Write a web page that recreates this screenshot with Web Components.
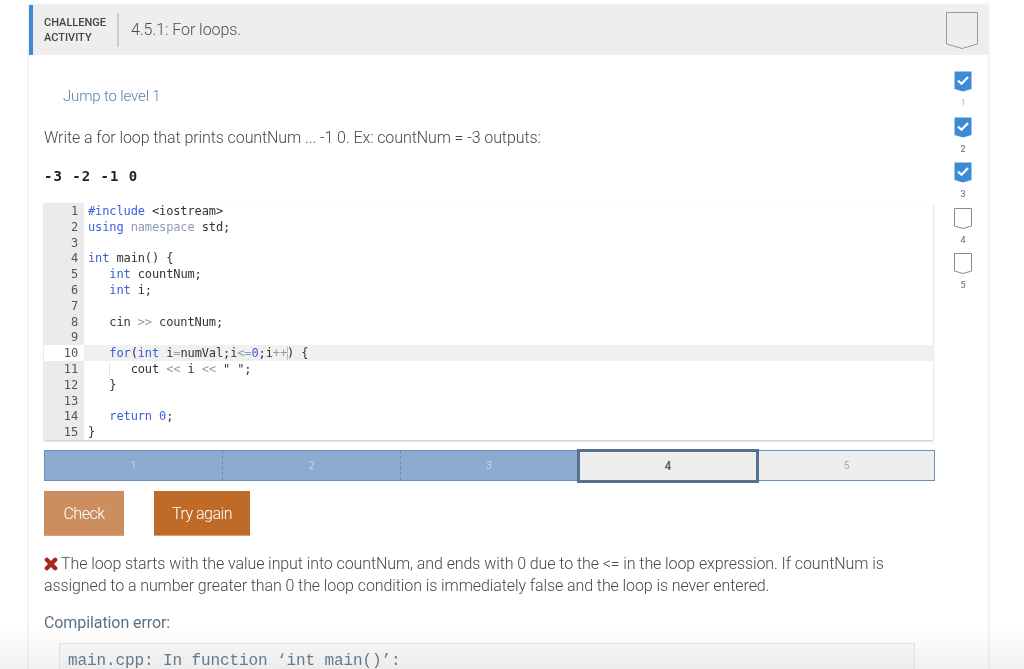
<!DOCTYPE html>
<html>
<head>
<meta charset="utf-8">
<title>4.5.1: For loops.</title>
<style>
html, body { margin: 0; height: 669px; overflow: hidden; background: #fff; }
body { font-family: Roboto, "Liberation Sans", sans-serif; font-weight: 300; font-size: 16px; letter-spacing: -.09px; color: #3f4a52; }
</style>
</head>
<body>
<challenge-card>
    <level-shield slot="badge" size="big"></level-shield>
    <challenge-body></challenge-body>
    <level-rail slot="rail"></level-rail>
</challenge-card>
<script>
class LevelShield extends HTMLElement {
    constructor() {
        super();
        this.attachShadow({ mode: 'open' });
    }
    connectedCallback() {
        const big = this.getAttribute('size') === 'big';
        const done = this.hasAttribute('done');
        const w = big ? 32 : 18;
        const h = big ? 37 : 21;
        const tip = big ? 5 : 3;
        const stroke = done ? 'none' : (big ? '#999' : '#8a8a8a');
        const fill = done ? '#3d8bd4' : (big ? '#eee' : '#fff');
        const check = done ? `<path d="M4 9.6 L7.6 12.8 L14 6" fill="none" stroke="#fff" stroke-width="2.2"/>` : '';
        this.shadowRoot.innerHTML = `
        <style>:host { display: block; width: ${w}px; height: ${h}px; } svg { display: block; }</style>
        <svg width="${w}" height="${h}" viewBox="0 0 ${w} ${h}">
            <path d="M.5 .5 H${w - .5} V${h - tip} L${w / 2} ${h - .5} L.5 ${h - tip} Z" fill="${fill}" stroke="${stroke}"/>
            ${check}
        </svg>`;
    }
}
customElements.define('level-shield', LevelShield);

class LevelRail extends HTMLElement {
    constructor() {
        super();
        this.attachShadow({ mode: 'open' });
    }
    connectedCallback() {
        const items = [1, 2, 3, 4, 5].map(n => `
            <div class="item">
                <level-shield ${n < 4 ? 'done' : ''}></level-shield>
                <span class="${n === 1 ? 'dim' : ''}">${n}</span>
            </div>`).join('');
        this.shadowRoot.innerHTML = `
        <style>
        :host { display: flex; flex-direction: column; align-items: center; width: 18px; }
        .item { display: flex; flex-direction: column; align-items: center; height: 45.5px; }
        span { font: 400 9px/12px Roboto, sans-serif; color: #666; margin-top: 5px; }
        .dim { color: #bbb; }
        </style>
        ${items}`;
    }
}
customElements.define('level-rail', LevelRail);

class ChallengeCard extends HTMLElement {
    constructor() {
        super();
        this.attachShadow({ mode: 'open' });
    }
    connectedCallback() {
        this.shadowRoot.innerHTML = `
        <style>
        :host { display: block; width: 959px; height: 664px; margin: 5px 0 0 29px; box-shadow: 0 0 3px rgba(0,0,0,.16); position: relative; background: #fff; }
        header { display: flex; align-items: center; height: 50px; background: #eee; box-sizing: border-box; border-left: 4px solid #3d8bd4; padding-left: 11px; padding-right: 10px; }
        .kind { width: 63px; font: 500 11px/15px Roboto, sans-serif; letter-spacing: 0; color: #444; padding-right: 10px; }
        .rule { width: 2px; height: 34px; background: #ccc; margin-right: 12px; }
        .title { flex: 1; font-size: 16px; color: #46525a; letter-spacing: -.05px; position: relative; top: -1px; }
        .row { display: flex; }
        .main { width: 890px; padding-left: 15px; }
        .rail { padding: 16px 0 0 20px; }
        .fade { position: absolute; left: -29px; width: 1024px; top: 620px; height: 44px; pointer-events: none; mix-blend-mode: multiply; background: linear-gradient(#fff, #f1f1f1); }
        </style>
        <header>
            <div class="kind">CHALLENGE ACTIVITY</div>
            <div class="rule"></div>
            <div class="title">4.5.1: For loops.</div>
            <slot name="badge"></slot>
        </header>
        <div class="row">
            <div class="main"><slot></slot></div>
            <div class="rail"><slot name="rail"></slot></div>
        </div>
        <div class="fade"></div>`;
    }
}
customElements.define('challenge-card', ChallengeCard);

class CodeEditor extends HTMLElement {
    constructor() {
        super();
        this.attachShadow({ mode: 'open' });
    }
    connectedCallback() {
        const k = s => `<b>${s}</b>`;
        const o = s => `<i>${s}</i>`;
        const lines = [
            `${k('#include')} &lt;iostream&gt;`,
            `${k('using')} ${o('namespace')} std;`,
            ``,
            `${k('int')} main() {`,
            `   ${k('int')} countNum;`,
            `   ${k('int')} i;`,
            ``,
            `   cin ${o('&gt;&gt;')} countNum;`,
            ``,
            `   ${k('for')}(${k('int')} i${o('=')}numVal;i${o('&lt;=')}${k('0')};i${o('++')}<u></u>) {`,
            `      cout ${o('&lt;&lt;')} i ${o('&lt;&lt;')} " ";`,
            `   }`,
            ``,
            `   ${k('return')} ${k('0')};`,
            `}`
        ];
        const html = lines.map((line, n) => `<div class="line${n === 9 ? ' active' : ''}"><span class="num">${n + 1}</span><span class="src">${line}</span></div>`).join('');
        this.shadowRoot.innerHTML = `
        <style>
        :host { display: block; width: 889px; box-shadow: 0 1px 2px rgba(0,0,0,.25); position: relative; }
        .line { display: flex; height: 15.8px; font: 400 12px/16.2px "DejaVu Sans Mono", monospace; color: #333; letter-spacing: -.12px; }
        .num { flex: none; width: 34px; padding-right: 6px; text-align: right; background: #ebebeb; color: #555; }
        .src { flex: 1; padding-left: 4px; white-space: pre; }
        .active { background: #f0f0f0; }
        .active .num { background: #fff; }
        b { font-weight: 400; color: #3b5fd9; }
        i { font-style: normal; color: #8f9bb0; }
        u { display: inline-block; width: 1px; height: 13px; background: #bbb; margin-right: -1px; vertical-align: -3px; }
        .guide { position: absolute; left: 65px; top: 160px; height: 15px; border-left: 1px dotted #ccc; }
        </style>
        ${html}
        <div class="guide"></div>`;
    }
}
customElements.define('code-editor', CodeEditor);

class LevelBar extends HTMLElement {
    constructor() {
        super();
        this.attachShadow({ mode: 'open' });
    }
    connectedCallback() {
        this.shadowRoot.innerHTML = `
        <style>
        :host { display: grid; grid-template-columns: 177px 178px 177px 182px 1fr; width: 891px; height: 31px; box-sizing: border-box; border: 1px solid #6b90b8; position: relative; letter-spacing: 0; }
        div { display: flex; align-items: center; justify-content: center; font: 400 10px Roboto, sans-serif; background: #8cabd0; color: #c5d5e8; }
        div + div { border-left: 1px dashed #6d8bac; }
        .cur + .todo, .cur { border-left: 0; }
        .cur { background: #eee; color: #666; font-weight: 700; font-size: 12px; box-sizing: border-box; border: 3px solid #56708f; margin: -2px 0 -3px 0; }
        .todo { background: #eee; color: #aaa; }
        </style>
        <div>1</div><div>2</div><div>3</div><div class="cur">4</div><div class="todo">5</div>`;
    }
}
customElements.define('level-bar', LevelBar);

class ActionButton extends HTMLElement {
    constructor() {
        super();
        this.attachShadow({ mode: 'open' });
    }
    connectedCallback() {
        this.shadowRoot.innerHTML = `
        <style>
        :host { display: flex; align-items: center; justify-content: center; height: 45px; box-sizing: border-box; padding-top: 2px; color: #fff; font-size: 16px; letter-spacing: -.5px; background: var(--bg); border-bottom: 1px solid #d9a177; }
        </style>
        <slot></slot>`;
    }
}
customElements.define('action-button', ActionButton);

class ChallengeBody extends HTMLElement {
    constructor() {
        super();
        this.attachShadow({ mode: 'open' });
    }
    connectedCallback() {
        this.shadowRoot.innerHTML = `
        <style>
        :host { display: block; }
        .jump { margin: 32px 0 0 19px; line-height: 19px; font-size: 15px; letter-spacing: -.15px; color: #5b7fa6; }
        .prompt { margin-top: 22px; line-height: 19px; }
        .output { margin: 20px 0 0; font: 700 14px/18px "DejaVu Sans Mono", monospace; letter-spacing: 1px; color: #222; }
        code-editor { margin-top: 18px; }
        level-bar { margin-top: 10px; }
        .actions { display: flex; gap: 30px; margin-top: 10px; }
        .check { width: 80px; --bg: #cc8e5e; }
        .retry { width: 96px; --bg: #bf6a27; }
        .feedback { margin: 17px 0 0; width: 860px; line-height: 22px; color: #3f4a52; }
        .x { vertical-align: -2px; margin-right: 3px; }
        .err { margin-top: 16px; line-height: 19px; font-weight: 400; color: #5b7184; }
        pre { margin: 11px 0 0 15px; width: 856px; height: 26px; box-sizing: border-box; border: 1px solid #e8e8e8; border-bottom: 0; background: #fafafa; padding: 8px 8px 0; font: 400 16px/18px "Liberation Mono", monospace; letter-spacing: -.1px; color: #667f90; }
        </style>
        <div class="jump">Jump to level 1</div>
        <div class="prompt">Write a for loop that prints countNum ... -1 0. Ex: countNum = -3 outputs:</div>
        <div class="output">-3 -2 -1 0</div>
        <code-editor></code-editor>
        <level-bar></level-bar>
        <div class="actions">
            <action-button class="check">Check</action-button>
            <action-button class="retry">Try again</action-button>
        </div>
        <p class="feedback"><svg class="x" width="14" height="14" viewBox="0 0 14 14"><path d="M2.8 2.8 L11.2 11.2 M11.2 2.8 L2.8 11.2" stroke="#a62a1e" stroke-width="4.4" stroke-linecap="round"/></svg>The loop starts with the value input into countNum, and ends with 0 due to the &lt;= in the loop expression. If countNum is assigned to a number greater than 0 the loop condition is immediately false and the loop is never entered.</p>
        <div class="err">Compilation error:</div>
        <pre>main.cpp: In function ‘int main()’:</pre>`;
    }
}
customElements.define('challenge-body', ChallengeBody);
</script>
</body>
</html>
